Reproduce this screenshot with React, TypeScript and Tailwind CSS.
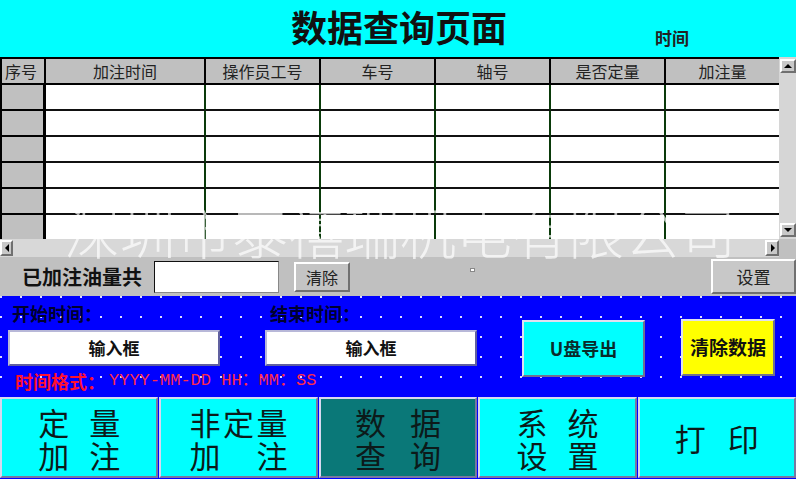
import React from 'react';

const columns = ['序号', '加注时间', '操作员工号', '车号', '轴号', '是否定量', '加注量'];
const rows = [0, 1, 2, 3, 4, 5];

const raised = 'border-2 border-t-white border-l-white border-r-[#707070] border-b-[#707070]';

function Arrow({ dir }: { dir: 'up' | 'down' | 'left' | 'right' }) {
  const pts = {
    up: '1,6 5,2 9,6',
    down: '1,2 5,6 9,2',
    left: '6,1 2,5 6,9',
    right: '3,1 7,5 3,9',
  }[dir];
  const box = dir === 'up' || dir === 'down' ? '0 0 10 8' : '0 0 8 10';
  return (
    <svg viewBox={box} className={dir === 'up' || dir === 'down' ? 'w-[10px] h-[8px]' : 'w-[8px] h-[10px]'}>
      <polygon points={pts} fill="#000" />
    </svg>
  );
}

function BigButton({ lines, width, teal }: { lines: string[][]; width: number; teal?: boolean }) {
  return (
    <div
      className={`flex-1 flex flex-col items-center justify-center border-2 border-t-[#d8d8f0] border-l-[#d8d8f0] border-r-[#7878a0] border-b-[#7878a0] ${
        teal ? 'bg-[#0a7878]' : 'bg-[#00ffff]'
      }`}
    >
      {lines.map((line, i) => (
        <div key={i} className="h-[33px] flex justify-between items-center text-[31px] leading-[31px] text-[#0c1a1a]" style={{ width }}>
          {line.map((c, j) => (
            <span key={j} className="block h-[31px] leading-[31px]">
              {c}
            </span>
          ))}
        </div>
      ))}
    </div>
  );
}

export default function App() {
  return (
    <div className="relative w-[796px] h-[479px] overflow-hidden bg-[#c0c0c0] font-['Noto_Sans_CJK_SC','Noto_Sans',sans-serif]">
      {/* Header */}
      <div className="h-[57px] bg-[#00ffff] flex items-start">
        <div className="ml-[291px] mt-[4px] text-[36px] leading-[44px] font-semibold text-[#111]">数据查询页面</div>
        <div className="ml-[148px] mt-[26px] text-[17px] leading-[24px] font-bold text-[#222]">时间</div>
      </div>

      {/* Table */}
      <div className="flex h-[182px]">
        <div className="grid grid-cols-[44px_160px_115px_115px_115px_115px_115px] grid-rows-[26px_26px_26px_26px_26px_26px_26px] w-[779px] border-t-2 border-l-2 border-black overflow-hidden">
          {columns.map((c, i) => (
            <div
              key={c}
              className={`bg-[#c0c0c0] border-b-2 border-r-2 border-black flex items-center justify-center text-[16px] text-[#222] ${
                i === 0 ? 'justify-start pl-[3px]' : ''
              }`}
            >
              {c}
            </div>
          ))}
          {rows.map((r) =>
            columns.map((c, i) => (
              <div
                key={`${r}-${c}`}
                className={
                  i === 0
                    ? 'bg-[#c0c0c0] border-r-[3px] border-b-2 border-r-black border-b-black'
                    : 'bg-white border-r-2 border-b-2 border-r-[#0a3a0a] border-b-[#111]'
                }
              />
            ))
          )}
        </div>
        <div className="w-[17px] bg-[#d6d6d6] flex flex-col justify-between py-[2px] pl-[1px]">
          <div className={`h-[14px] bg-[#c8c8c8] ${raised} flex items-center justify-center`}>
            <Arrow dir="up" />
          </div>
          <div className={`h-[14px] bg-[#c8c8c8] ${raised} flex items-center justify-center`}>
            <Arrow dir="down" />
          </div>
        </div>
      </div>

      {/* Horizontal scrollbar */}
      <div className="flex h-[18px]">
        <div className="w-[779px] bg-[#d8d8d8] flex justify-between items-center">
          <div className={`w-[13px] h-[16px] bg-[#c8c8c8] ${raised} flex items-center justify-center`}>
            <Arrow dir="left" />
          </div>
          <div className={`w-[14px] h-[16px] bg-[#c8c8c8] ${raised} flex items-center justify-center`}>
            <Arrow dir="right" />
          </div>
        </div>
        <div className="flex-1 bg-[#c0c0c0]" />
      </div>

      {/* Total row */}
      <div className="h-[39px] flex items-center bg-[#c0c0c0]">
        <span className="ml-[22px] text-[20px] font-bold text-[#111] leading-[26px]">已加注油量共</span>
        <div className="ml-[12px] w-[125px] h-[32px] bg-white border border-[#111] border-r-[#888] border-b-[#888]" />
        <div className={`ml-[15px] w-[56px] h-[30px] bg-[#c4c4c4] ${raised} flex items-center justify-center text-[16px] text-[#222]`}>
          清除
        </div>
        <div className="ml-[120px] mt-[-14px] w-[5px] h-[4px] bg-white border border-[#888]" />
        <div className={`ml-auto w-[85px] h-[35px] bg-[#c8c8c8] ${raised} flex items-center justify-center text-[17px] text-[#222]`}>
          设置
        </div>
      </div>

      {/* Blue panel */}
      <div className="h-[100px] bg-[#0000ff] bg-[radial-gradient(circle,rgba(255,255,255,0.85)_0.8px,transparent_1.3px)] bg-[length:20px_20px] bg-[position:-9px_-9px] flex">
        <div className="pl-[8px] pt-[6px] flex flex-col">
          <div className="grid grid-cols-[257px_212px]">
            <span className="pl-[4px] text-[18px] leading-[22px] font-bold text-[#000030]">开始时间：</span>
            <span className="pl-[5px] text-[18px] leading-[22px] font-bold text-[#000030]">结束时间：</span>
          </div>
          <div className="grid grid-cols-[257px_212px] mt-[6px]">
            <div className="w-[212px] h-[36px] bg-white border-2 border-t-[#b8b8d8] border-l-[#b8b8d8] border-r-[#6060a0] border-b-[#6060a0] flex items-center justify-center text-[17px] font-bold text-[#111]">
              输入框
            </div>
            <div className="w-[212px] h-[36px] bg-white border-2 border-t-[#b8b8d8] border-l-[#b8b8d8] border-r-[#6060a0] border-b-[#6060a0] flex items-center justify-center text-[17px] font-bold text-[#111]">
              输入框
            </div>
          </div>
          <div className="mt-[5px] pl-[7px] flex items-center leading-[20px]">
            <span className="text-[18px] font-bold text-[#ff1030]">时间格式：</span>
            <span className="ml-[4px] text-[17px] text-[#ff2a4a] font-['Liberation_Mono','Noto_Sans_CJK_SC',monospace]">
              YYYY-MM-DD HH：MM：SS
            </span>
          </div>
        </div>
        <div className="ml-[45px] mt-[24px] w-[123px] h-[57px] bg-[#00ffff] border-2 border-t-[#e0e0f0] border-l-[#e0e0f0] border-r-[#707090] border-b-[#707090] flex items-center justify-center text-[18px] font-bold text-[#0a2a2a]">
          U盘导出
        </div>
        <div className="ml-[36px] mt-[23px] w-[94px] h-[57px] bg-[#ffff00] border-2 border-t-[#e0e0f0] border-l-[#e0e0f0] border-r-[#707090] border-b-[#707090] flex items-center justify-center text-[19px] font-bold text-[#111]">
          清除数据
        </div>
      </div>

      {/* Bottom navigation */}
      <div className="h-[83px] bg-[#0000ff] flex gap-[1px] pt-[1px] pb-[1px]">
        <BigButton width={82} lines={[['定', '量'], ['加', '注']]} />
        <BigButton width={98} lines={[['非', '定', '量'], ['加', '注']]} />
        <BigButton width={86} teal lines={[['数', '据'], ['查', '询']]} />
        <BigButton width={82} lines={[['系', '统'], ['设', '置']]} />
        <BigButton width={84} lines={[['打', '印']]} />
      </div>

      {/* Watermark */}
      <div className="pointer-events-none absolute left-[64px] top-[198px] text-[56px] leading-[64px] font-light text-white/70 whitespace-nowrap">
        深圳市泰禧瑞机电有限公司
      </div>
    </div>
  );
}
